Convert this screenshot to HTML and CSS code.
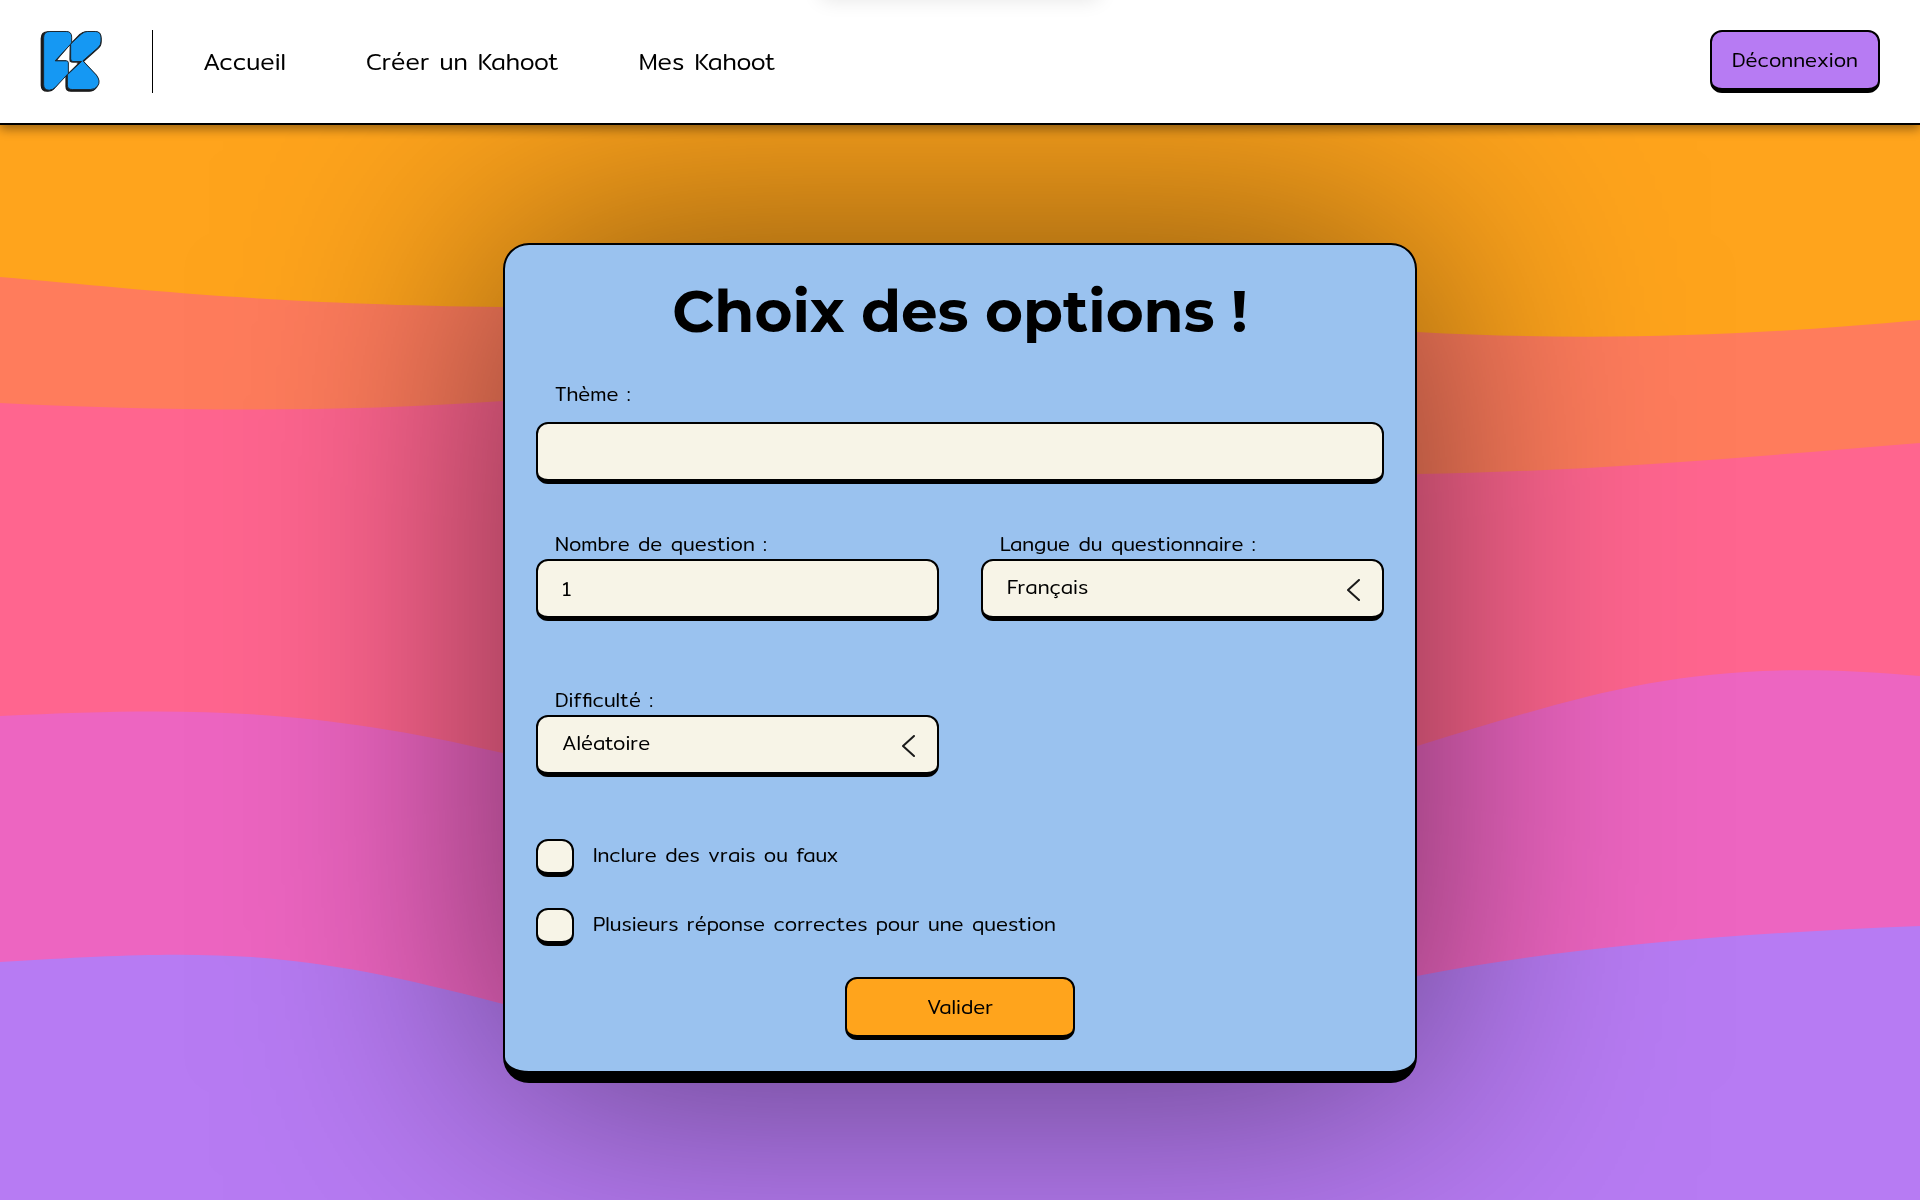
FILE: index.html
```html
<!DOCTYPE html>
<html lang="fr">
<head>
  <meta charset="utf-8">
  <meta name="viewport" content="width=device-width, initial-scale=1">
  <title>Choix des options</title>
  <link rel="stylesheet" href="styles.css">
</head>
<body>
  <svg class="waves" viewBox="0 0 1920 1200" preserveAspectRatio="none" aria-hidden="true">
    <path fill="#ff7c5c" d="M0 277C140 289 260 304 503 307C800 308 1100 328 1417 332C1600 342 1760 335 1920 320V1200H0Z"/>
    <path fill="#ff658f" d="M0 403C160 411 330 413 503 401C800 390 1100 480 1417 474C1580 472 1760 456 1920 443V1200H0Z"/>
    <path fill="#ed65c1" d="M0 716C200 706 320 710 503 753C800 820 1100 840 1417 746C1600 690 1700 656 1920 676V1200H0Z"/>
    <path fill="#b77bf3" d="M0 962C220 948 300 950 503 1004C800 1080 1100 1020 1417 976C1560 948 1720 934 1920 926V1200H0Z"/>
  </svg>

  <header class="header">
    <a class="logo" href="#" aria-label="Kahoot">
      <svg class="logo-mark" viewBox="60 60 188 188" aria-hidden="true">
        <g fill="#1a1a1a" stroke="#1a1a1a" stroke-width="4" stroke-linejoin="round">
          <path d="M84 64H136Q152 64 152 80V100L108 152H138V190L104 234Q96 244 84 244H82Q64 244 64 226V84Q64 64 84 64Z"/>
          <path d="M152 102L181 72Q190 64 200 64H226Q245 64 245 84V94Q245 106 236 114L191 154L230 197Q242 215 232 231Q223 244 209 244H154Q139 244 139 230V198L180 158H156Q151 158 151 150Z"/>
        </g>
        <g fill="#1598f3" stroke="#1d2730" stroke-width="3" stroke-linejoin="round">
          <path d="M90 63H140Q156 63 156 80V98L106 152H140Q146 152 146 158V190L107 232Q98 241 88 241Q71 241 71 224V82Q71 63 90 63Z"/>
          <path d="M156 98L185 71Q194 63 204 63H228Q245 63 245 82V92Q245 104 236 112L190 152L231 195Q245 214 235 228Q227 239 213 239H158Q143 239 143 225V194L186 154H160Q153 154 153 146V102Z"/>
        </g>
        <path fill="#fff" d="M148 112L114 149H144Q149 149 149 155V180L174 158H160Q148 158 148 146Z"/>
      </svg>
    </a>
    <nav class="nav" aria-label="Navigation principale">
      <a href="#">Accueil</a>
      <a href="#">Créer un Kahoot</a>
      <a href="#">Mes Kahoot</a>
    </nav>
    <button class="button logout" type="button">Déconnexion</button>
  </header>

  <div class="toast" role="status"></div>

  <main class="main">
    <form class="card">
      <h1 class="title">Choix des options !</h1>

      <div class="field field-theme">
        <label for="theme">Thème :</label>
        <input class="control" id="theme" type="text">
      </div>

      <div class="grid">
        <div class="field">
          <label for="count">Nombre de question :</label>
          <input class="control" id="count" type="number" value="1" min="1">
        </div>
        <div class="field">
          <label for="language">Langue du questionnaire :</label>
          <div class="select">
            <select class="control" id="language"><option>Français</option></select>
            <svg class="chevron" viewBox="0 0 13 22" aria-hidden="true"><path d="M12 1L1 11L12 21"/></svg>
          </div>
        </div>
        <div class="field">
          <label for="difficulty">Difficulté :</label>
          <div class="select">
            <select class="control" id="difficulty"><option>Aléatoire</option></select>
            <svg class="chevron" viewBox="0 0 13 22" aria-hidden="true"><path d="M12 1L1 11L12 21"/></svg>
          </div>
        </div>
      </div>

      <div class="checks">
        <div class="check">
          <input id="truefalse" type="checkbox">
          <label for="truefalse">Inclure des vrais ou faux</label>
        </div>
        <div class="check">
          <input id="multiple" type="checkbox">
          <label for="multiple">Plusieurs réponse correctes pour une question</label>
        </div>
      </div>

      <button class="button submit" type="submit">Valider</button>
    </form>
  </main>
</body>
</html>
```
FILE: styles.css
```css
* {
  box-sizing: border-box;
}

body {
  margin: 0;
  min-height: 100vh;
  display: flex;
  flex-direction: column;
  background: #ffa41c;
  color: #000;
  font-family: Mitr, "Open Sans", "Noto Sans", sans-serif;
  font-size: 20px;
  font-weight: 300;
  line-height: 28px;
}

.waves {
  position: fixed;
  inset: 0;
  z-index: -1;
  width: 100%;
  height: 100%;
}

.header {
  position: relative;
  z-index: 1;
  display: flex;
  align-items: center;
  padding: 30px 40px;
  background: #fff;
  border-bottom: 2px solid #000;
  box-shadow: 0 4px 10px rgba(0, 0, 0, 0.4);
}

.logo {
  display: flex;
  padding-right: 50px;
  border-right: 1px solid #000;
}

.logo-mark {
  width: 62px;
  height: 63px;
}

.nav {
  display: flex;
  gap: 80px;
  padding: 0 0 2px 50px;
  font-size: 24px;
}

.nav a {
  color: inherit;
  text-decoration: none;
}

.button {
  height: 63px;
  padding: 0 18px;
  border: 2px solid #000;
  border-bottom-width: 5px;
  border-radius: 12px;
  color: #000;
  font: inherit;
  cursor: pointer;
}

.logout {
  width: 170px;
  margin-left: auto;
  background: #b77bf3;
}

.toast {
  position: fixed;
  z-index: 2;
  top: -60px;
  left: 50%;
  width: 280px;
  height: 60px;
  border-radius: 8px;
  box-shadow: 0 0 20px rgba(0, 0, 0, 0.1);
  transform: translateX(-50%);
}

.main {
  flex: 1;
  display: flex;
  align-items: center;
  justify-content: center;
  padding: 40px 20px;
}

.card {
  display: flex;
  flex-direction: column;
  width: 100%;
  max-width: 914px;
  padding: 31px;
  background: #9ac2ef;
  border: 2px solid #000;
  border-bottom-width: 12px;
  border-radius: 26px;
  box-shadow: 0 0 300px 12px rgba(0, 0, 0, 0.5);
}

.title {
  margin: 0;
  font-family: Montserrat, Inter, sans-serif;
  font-size: 58px;
  font-weight: 700;
  line-height: 72px;
  text-align: center;
}

.field {
  display: flex;
  flex-direction: column;
}

.field label {
  padding: 0 0 1px 19px;
}

.field-theme {
  gap: 13px;
  margin: 32px 0 46px;
}

.grid {
  display: grid;
  grid-template-columns: 1fr 1fr;
  gap: 65px 42px;
}

.control {
  width: 100%;
  height: 62px;
  padding: 0 24px;
  background: #f7f4e7;
  border: 2px solid #000;
  border-bottom-width: 5px;
  border-radius: 12px;
  color: #000;
  font: inherit;
  appearance: none;
}

.select {
  display: grid;
}

.select .control {
  padding-bottom: 2px;
}

.select > * {
  grid-area: 1 / 1;
}

.chevron {
  width: 13px;
  height: 22px;
  margin-right: 24px;
  align-self: center;
  justify-self: end;
  pointer-events: none;
  fill: none;
  stroke: #1a1a1a;
  stroke-width: 2;
  stroke-linecap: round;
  stroke-linejoin: round;
}

.checks {
  display: grid;
  gap: 31px;
  margin: 62px 0 31px;
}

.check {
  display: flex;
  align-items: center;
  gap: 19px;
}

.check input {
  flex: none;
  width: 38px;
  height: 38px;
  margin: 0;
  background: #f7f4e7;
  border: 2px solid #000;
  border-bottom-width: 5px;
  border-radius: 12px;
  appearance: none;
}

.check label {
  padding-bottom: 6px;
}

.submit {
  align-self: center;
  width: 230px;
  background: #ffa41c;
}
```
